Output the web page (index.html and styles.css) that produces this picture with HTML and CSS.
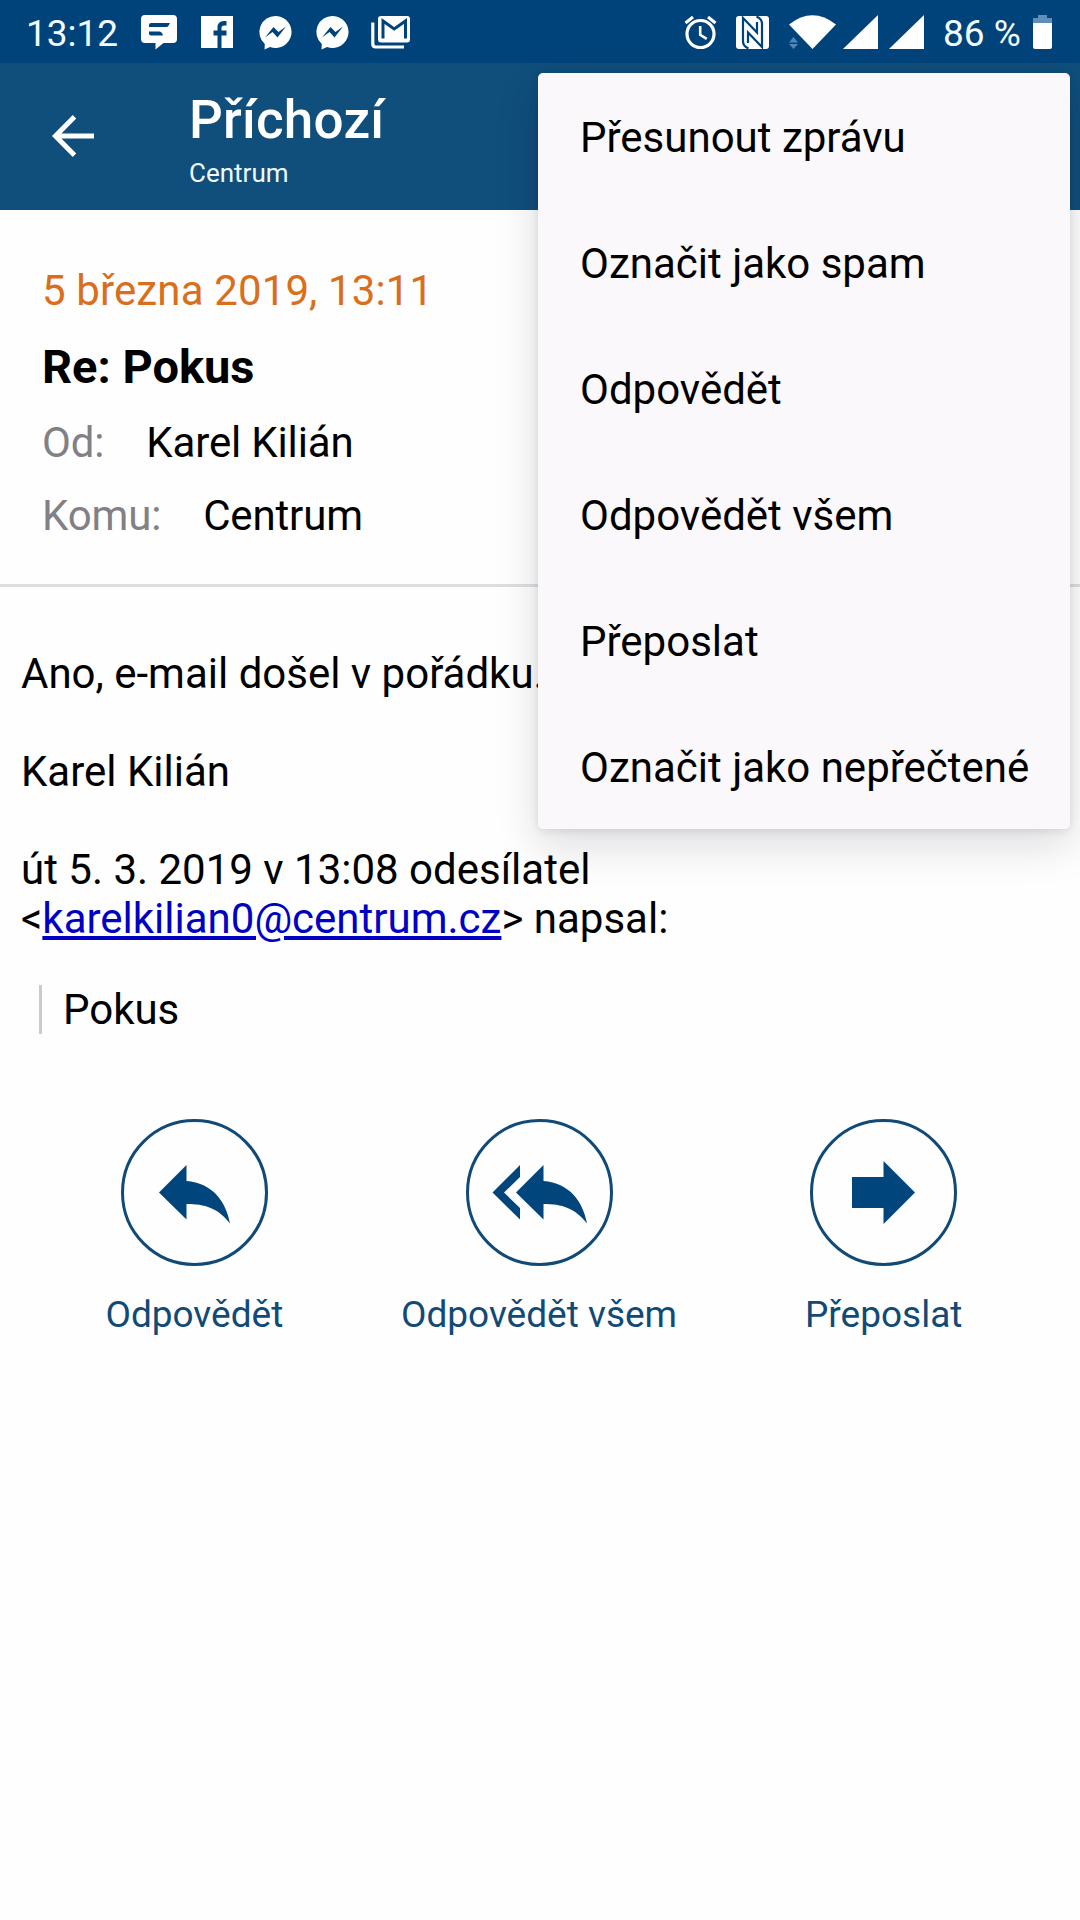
FILE: index.html
```html
<!DOCTYPE html>
<html lang="cs">
<head>
    <meta charset="UTF-8">
    <meta name="viewport" content="width=device-width, initial-scale=1.0">
    <title>Příchozí - Centrum</title>
    <link rel="stylesheet" href="styles.css">
</head>
<body>
    <div class="status-bar">
        <div class="status-left">
            <span class="status-time">13:12</span>
            <svg width="36" height="34" viewBox="0 0 36 34">
                <path fill="#fff" fill-rule="evenodd" d="M4 0h28q4 0 4 4v20q0 4-4 4h-9.500L14.500 34.500V28H4q-4 0-4-4V4q0-4 4-4zM10 8q-2 0-2 2v2h18q1 0 3-4zM8 16.500v2q0 2 2 2h12q-1-4-4-4z"/>
            </svg>
            <svg class="icon-facebook" width="34" height="34" viewBox="0 0 34 34">
                <rect x="0" y="1" width="32" height="32" fill="#fff"/>
                <path fill="#00437a" d="M16.500 33V20.500h-4v-5h4V12.500q0-6.500 6.500-6.500h2.500v4.500h-2.500q-2.500 0-2.500 2.500v2.500h5v5h-5V33z"/>
            </svg>
            <svg width="33" height="34" viewBox="0 0 33 34">
                <path fill="#fff" d="M17 1a16 16 0 1 1-6 31l-5.500 2.500L5.800 29A16 16 0 0 1 17 1z"/>
                <path fill="#00437a" d="M6 22.500l8.500-10.500 5 5 7.500-5.500-8.500 11-5-5.500z"/>
            </svg>
            <svg width="33" height="34" viewBox="0 0 33 34">
                <path fill="#fff" d="M17 1a16 16 0 1 1-6 31l-5.500 2.500L5.800 29A16 16 0 0 1 17 1z"/>
                <path fill="#00437a" d="M6 22.500l8.500-10.500 5 5 7.500-5.500-8.500 11-5-5.500z"/>
            </svg>
            <svg class="icon-gmail" width="39" height="34" viewBox="0 0 39 34">
                <path fill="none" stroke="#fff" stroke-width="3.200" d="M1.800 7.500V29q0 3 3 3H33"/>
                <rect x="7" y="1" width="32" height="26.500" rx="3" fill="#fff"/>
                <path fill="none" stroke="#00437a" stroke-width="3" d="M12 23.500V6l11.200 8L34.500 6v17.500"/>
            </svg>
        </div>
        <div class="status-right">
            <svg width="33" height="34" viewBox="0 0 33 34">
                <circle cx="16.500" cy="19" r="13.500" fill="none" stroke="#fff" stroke-width="3.200"/>
                <path fill="none" stroke="#fff" stroke-width="2.600" d="M16.200 11v8.800l6.500 4"/>
                <path fill="none" stroke="#fff" stroke-width="3" d="M1.500 8L9 2M24 2l7.500 6"/>
            </svg>
            <svg class="icon-nfc" width="33" height="34" viewBox="0 0 33 34">
                <rect x="0" y="1" width="33" height="33" rx="3" fill="#fff"/>
                <path fill="none" stroke="#00437a" stroke-width="2.200" d="M12.500 33.500Q7 31 7 26.500V3L21 17.500V7M20.500 1.500Q26 4 26 8.500V32L12 17.500V28"/>
            </svg>
            <svg class="icon-wifi" width="48" height="34" viewBox="0 0 48 34">
                <path fill="#fff" d="M24.500 34L1 9.500Q24.500-9 48 9.500z"/>
                <path fill="#4f86b4" d="M1 27.500l4.500-5.500 4.500 5.500zM1 29l4.500 5 4.500-5z"/>
            </svg>
            <svg class="icon-signal" width="35" height="34" viewBox="0 0 35 34">
                <path fill="#fff" d="M0 34L35 0v34z"/>
            </svg>
            <svg class="icon-signal second" width="35" height="34" viewBox="0 0 35 34">
                <path fill="#fff" d="M0 34L35 0v34z"/>
            </svg>
            <span class="status-battery">86 %</span>
            <svg width="19" height="34" viewBox="0 0 19 34">
                <path fill="#5f8fb8" d="M5 0h9v3h5v5H0V3h5z"/>
                <path fill="#fff" d="M0 8h19v24q0 2-2 2H2q-2 0-2-2z"/>
            </svg>
        </div>
    </div>

    <div class="app-bar">
        <svg class="back" width="42" height="42" viewBox="0 0 42 42">
            <path fill="none" stroke="#fff" stroke-width="5" d="M22.500 1.800L3.500 21l19 19.200M3 21h39"/>
        </svg>
        <div>
            <h1>Příchozí</h1>
            <p>Centrum</p>
        </div>
    </div>

    <div class="message-header">
        <div class="date">5 března 2019, 13:11</div>
        <h2>Re: Pokus</h2>
        <div class="address"><span class="label">Od:</span><span>Karel Kilián</span></div>
        <div class="address"><span class="label">Komu:</span><span>Centrum</span></div>
    </div>

    <div class="message-body">
        <p>Ano, e-mail došel v pořádku.</p>
        <p>Karel Kilián</p>
        <p>út 5. 3. 2019 v 13:08 odesílatel<br>&lt;<a href="mailto:karelkilian0@centrum.cz">karelkilian0@centrum.cz</a>&gt; napsal:</p>
        <blockquote>Pokus</blockquote>
    </div>

    <div class="actions">
        <div class="action">
            <svg width="147" height="147" viewBox="0 0 147 147">
                <circle cx="73.500" cy="73.500" r="72" fill="none" stroke="#114a76" stroke-width="3"/>
                <path fill="#00457c" d="M38 73.500L65.500 46v16C91 64 105 82 109 104.500 97 89 84 85 65.500 85v15.500z"/>
            </svg>
            <span>Odpovědět</span>
        </div>
        <div class="action">
            <svg width="147" height="147" viewBox="0 0 147 147">
                <circle cx="73.500" cy="73.500" r="72" fill="none" stroke="#114a76" stroke-width="3"/>
                <path fill="#00457c" d="M26.500 73.500L54 46v12L38 73.500 54 89v11.500z"/>
                <path fill="#00457c" d="M50 73.500L77.500 46v16C103 64 117 82 121 104.500 109 89 96 85 77.500 85v15.500z"/>
            </svg>
            <span>Odpovědět všem</span>
        </div>
        <div class="action">
            <svg width="147" height="147" viewBox="0 0 147 147">
                <circle cx="73.500" cy="73.500" r="72" fill="none" stroke="#114a76" stroke-width="3"/>
                <path fill="#00457c" d="M42 58h31.500V42l31.500 31.500-31.500 31.500V89H42z"/>
            </svg>
            <span>Přeposlat</span>
        </div>
    </div>

    <div class="menu">
        <div class="menu-item">Přesunout zprávu</div>
        <div class="menu-item">Označit jako spam</div>
        <div class="menu-item">Odpovědět</div>
        <div class="menu-item">Odpovědět všem</div>
        <div class="menu-item">Přeposlat</div>
        <div class="menu-item">Označit jako nepřečtené</div>
    </div>
</body>
</html>
```
FILE: styles.css
```css
* {
    box-sizing: border-box;
}

body {
    position: relative;
    width: 1080px;
    height: 1920px;
    margin: 0;
    overflow: hidden;
    font-family: Roboto, sans-serif;
    font-size: 42px;
    line-height: 49px;
    background: #fefefe;
    color: #000000;
}

h1, h2, p, blockquote {
    margin: 0;
}

svg {
    display: block;
    flex: none;
    overflow: visible;
}

.status-bar {
    display: flex;
    justify-content: space-between;
    height: 63px;
    padding: 0 28px 0 26px;
    background: #00437a;
    color: #f4fcff;
    font-size: 37px;
}

.status-left,
.status-right {
    display: flex;
    align-items: center;
}

.status-left {
    gap: 24px;
}

.status-time {
    width: 91px;
    padding-top: 3px;
    white-space: nowrap;
}

.icon-gmail {
    margin-left: -2px;
}

.icon-nfc,
.icon-wifi {
    margin-left: 19px;
}

.icon-signal {
    margin-left: 7px;
}

.icon-signal.second {
    margin-left: 11px;
}

.status-battery {
    width: 90px;
    margin-left: 19px;
    padding-top: 3px;
    white-space: nowrap;
}

.app-bar {
    display: flex;
    height: 147px;
    padding-left: 52px;
    background: #104e7b;
    color: #ffffff;
}

.back {
    margin: 52px 95px 0 0;
}

.app-bar h1 {
    margin-top: 26px;
    font-size: 53px;
    font-weight: 500;
    line-height: 62px;
    letter-spacing: 0.2px;
}

.app-bar p {
    margin-top: 6px;
    font-size: 26px;
    line-height: 32px;
    color: #effaff;
}

.message-header {
    padding: 56px 42px 44px;
    border-bottom: 3px solid #dfdde0;
}

.date {
    letter-spacing: 0.13px;
    color: #d96f1c;
}

.message-header h2 {
    margin: 25px 0 24px;
    font-size: 47px;
    font-weight: 700;
    line-height: 54px;
}

.address {
    display: flex;
    gap: 42px;
    letter-spacing: -0.15px;
}

.address + .address {
    margin-top: 24px;
}

.label {
    color: #828085;
}

.message-body {
    padding: 62px 21px 0;
}

.message-body p {
    margin-bottom: 49px;
}

.message-body a {
    color: #0000c4;
}

.message-body blockquote {
    margin: -7px 0 0 18px;
    padding-left: 21px;
    border-left: 3px solid #cccacf;
}

.actions {
    display: flex;
    margin-top: 85px;
    padding: 0 24px 0 22px;
}

.action {
    flex: 1;
    display: flex;
    flex-direction: column;
    align-items: center;
    gap: 27px;
    font-size: 37px;
    line-height: 44px;
    color: #114a76;
}

.menu {
    position: absolute;
    top: 73px;
    left: 538px;
    width: 532px;
    height: 756px;
    padding: 2px 42px 0;
    border-radius: 5px;
    background: #faf8fb;
    box-shadow: 0 16px 44px rgba(20, 10, 30, 0.14), 0 2px 8px rgba(20, 10, 30, 0.1);
}

.menu-item {
    height: 126px;
    line-height: 126px;
    white-space: nowrap;
}
```
